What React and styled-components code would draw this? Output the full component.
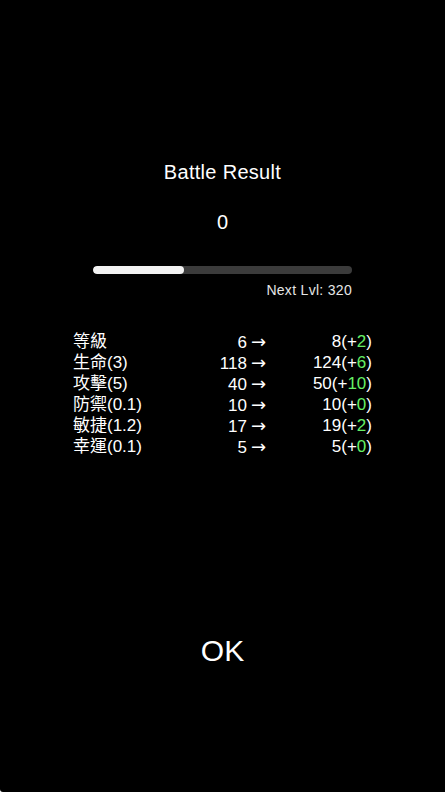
import React from "react";
import styled, { createGlobalStyle } from "styled-components";

const GlobalStyle = createGlobalStyle`
  html, body {
    margin: 0;
    padding: 0;
    background: #ffffff;
  }
  body {
    font-family: "Liberation Sans", "Noto Sans CJK TC", sans-serif;
  }
`;

const stats = [
  { name: "等級", before: 6, after: 8, gain: 2 },
  { name: "生命(3)", before: 118, after: 124, gain: 6 },
  { name: "攻擊(5)", before: 40, after: 50, gain: 10 },
  { name: "防禦(0.1)", before: 10, after: 10, gain: 0 },
  { name: "敏捷(1.2)", before: 17, after: 19, gain: 2 },
  { name: "幸運(0.1)", before: 5, after: 5, gain: 0 },
];

const expNow = 112;
const expNext = 320;

const App = () => {
  const pct = Math.round((expNow / expNext) * 1000) / 10;

  return (
    <>
      <GlobalStyle />
      <Screen>
        <Title>Battle Result</Title>
        <Score>0</Score>

        <ExpBlock>
          <Track>
            <Fill style={{ width: `${pct}%` }} />
          </Track>
          <NextLvl>Next Lvl: {expNext}</NextLvl>
        </ExpBlock>

        <StatTable>
          {stats.map((s) => (
            <React.Fragment key={s.name}>
              <StatName>{s.name}</StatName>
              <StatBefore>
                {s.before}
                <Arrow>→</Arrow>
              </StatBefore>
              <StatAfter>
                {s.after}(+<Gain>{s.gain}</Gain>)
              </StatAfter>
            </React.Fragment>
          ))}
        </StatTable>

        <OkButton type="button">OK</OkButton>
      </Screen>
    </>
  );
};

export default App;

const Screen = styled.div`
  width: 445px;
  height: 792px;
  background-color: #000000;
  color: #ffffff;
  display: flex;
  flex-direction: column;
  align-items: center;
  border-bottom-left-radius: 3px;
  overflow: hidden;
`;

const Title = styled.div`
  margin-top: 160px;
  font-size: 20px;
  line-height: 24px;
  letter-spacing: 0.3px;
`;

const Score = styled.div`
  margin-top: 26px;
  font-size: 20px;
  line-height: 24px;
`;

const ExpBlock = styled.div`
  width: 259px;
  margin-top: 32px;
  display: flex;
  flex-direction: column;
`;

const Track = styled.div`
  height: 8px;
  border-radius: 4px;
  background-color: #3b3b3b;
  overflow: hidden;
`;

const Fill = styled.div`
  height: 100%;
  border-radius: 4px;
  background-color: #f2f2f2;
`;

const NextLvl = styled.div`
  margin-top: 8px;
  text-align: right;
  font-size: 14px;
  line-height: 16px;
  letter-spacing: 0.3px;
  color: #e6e6e6;
`;

const StatTable = styled.div`
  width: 299px;
  margin-top: 33px;
  display: grid;
  grid-template-columns: 110px 83px 106px;
  grid-auto-rows: 21px;
  font-size: 17px;
  line-height: 21px;
`;

const StatName = styled.div`
  text-align: left;
  white-space: nowrap;
`;

const StatBefore = styled.div`
  text-align: right;
  white-space: nowrap;
`;

const Arrow = styled.span`
  margin-left: 4px;
  font-family: "DejaVu Sans", sans-serif;
  font-size: 18px;
`;

const StatAfter = styled.div`
  text-align: right;
  white-space: nowrap;
`;

const Gain = styled.span`
  color: #66f066;
`;

const OkButton = styled.button`
  margin-top: 176px;
  padding: 0;
  border: none;
  background: none;
  color: #ffffff;
  font-family: "Liberation Sans", sans-serif;
  font-size: 30px;
  line-height: 36px;
  cursor: pointer;
`;
